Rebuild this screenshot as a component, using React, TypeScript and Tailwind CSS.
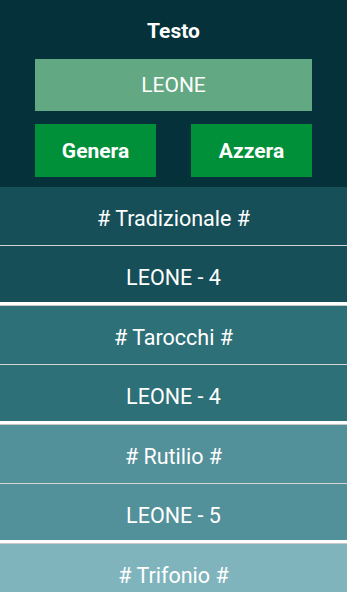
import React from "react";

const groups = [
  { title: "# Tradizionale #", value: "LEONE - 4", bg: "bg-[#164f58]" },
  { title: "# Tarocchi #", value: "LEONE - 4", bg: "bg-[#2d7077]" },
  { title: "# Rutilio #", value: "LEONE - 5", bg: "bg-[#52909a]" },
  { title: "# Trifonio #", value: "LEONE - 4", bg: "bg-[#80b4bd]" },
];

export default function App() {
  return (
    <div className="w-[347px] h-[592px] overflow-hidden bg-white font-['Roboto',sans-serif] text-white">
      <div className="h-[187px] bg-[#04313a] flex flex-col items-center">
        <div className="mt-[18px] h-[26px] text-[21px] font-bold leading-[26px]">Testo</div>
        <div className="mt-[15px] w-[277px] h-[52px] bg-[#62a882] flex items-center justify-center text-[21px] pt-[2px]">
          LEONE
        </div>
        <div className="mt-[13px] w-[277px] flex justify-between">
          <div className="w-[121px] h-[53px] bg-[#00903a] flex items-center justify-center text-[21px] font-bold pt-[2px]">
            Genera
          </div>
          <div className="w-[121px] h-[53px] bg-[#00903a] flex items-center justify-center text-[21px] font-bold pt-[2px]">
            Azzera
          </div>
        </div>
      </div>
      {groups.map((g, i) => (
        <div key={i} className="flex flex-col">
          <div className={`h-[58px] ${g.bg} flex items-center justify-center text-[21.5px] pt-[7px]`}>{g.title}</div>
          <div className="h-[1px] bg-[#d4d4d4]" />
          <div className={`h-[56px] ${g.bg} flex items-center justify-center text-[21.5px] pt-[8px]`}>{g.value}</div>
          <div className="h-[3px] bg-white" />
          <div className="h-[1px] bg-[#c8c8c8]" />
        </div>
      ))}
    </div>
  );
}
